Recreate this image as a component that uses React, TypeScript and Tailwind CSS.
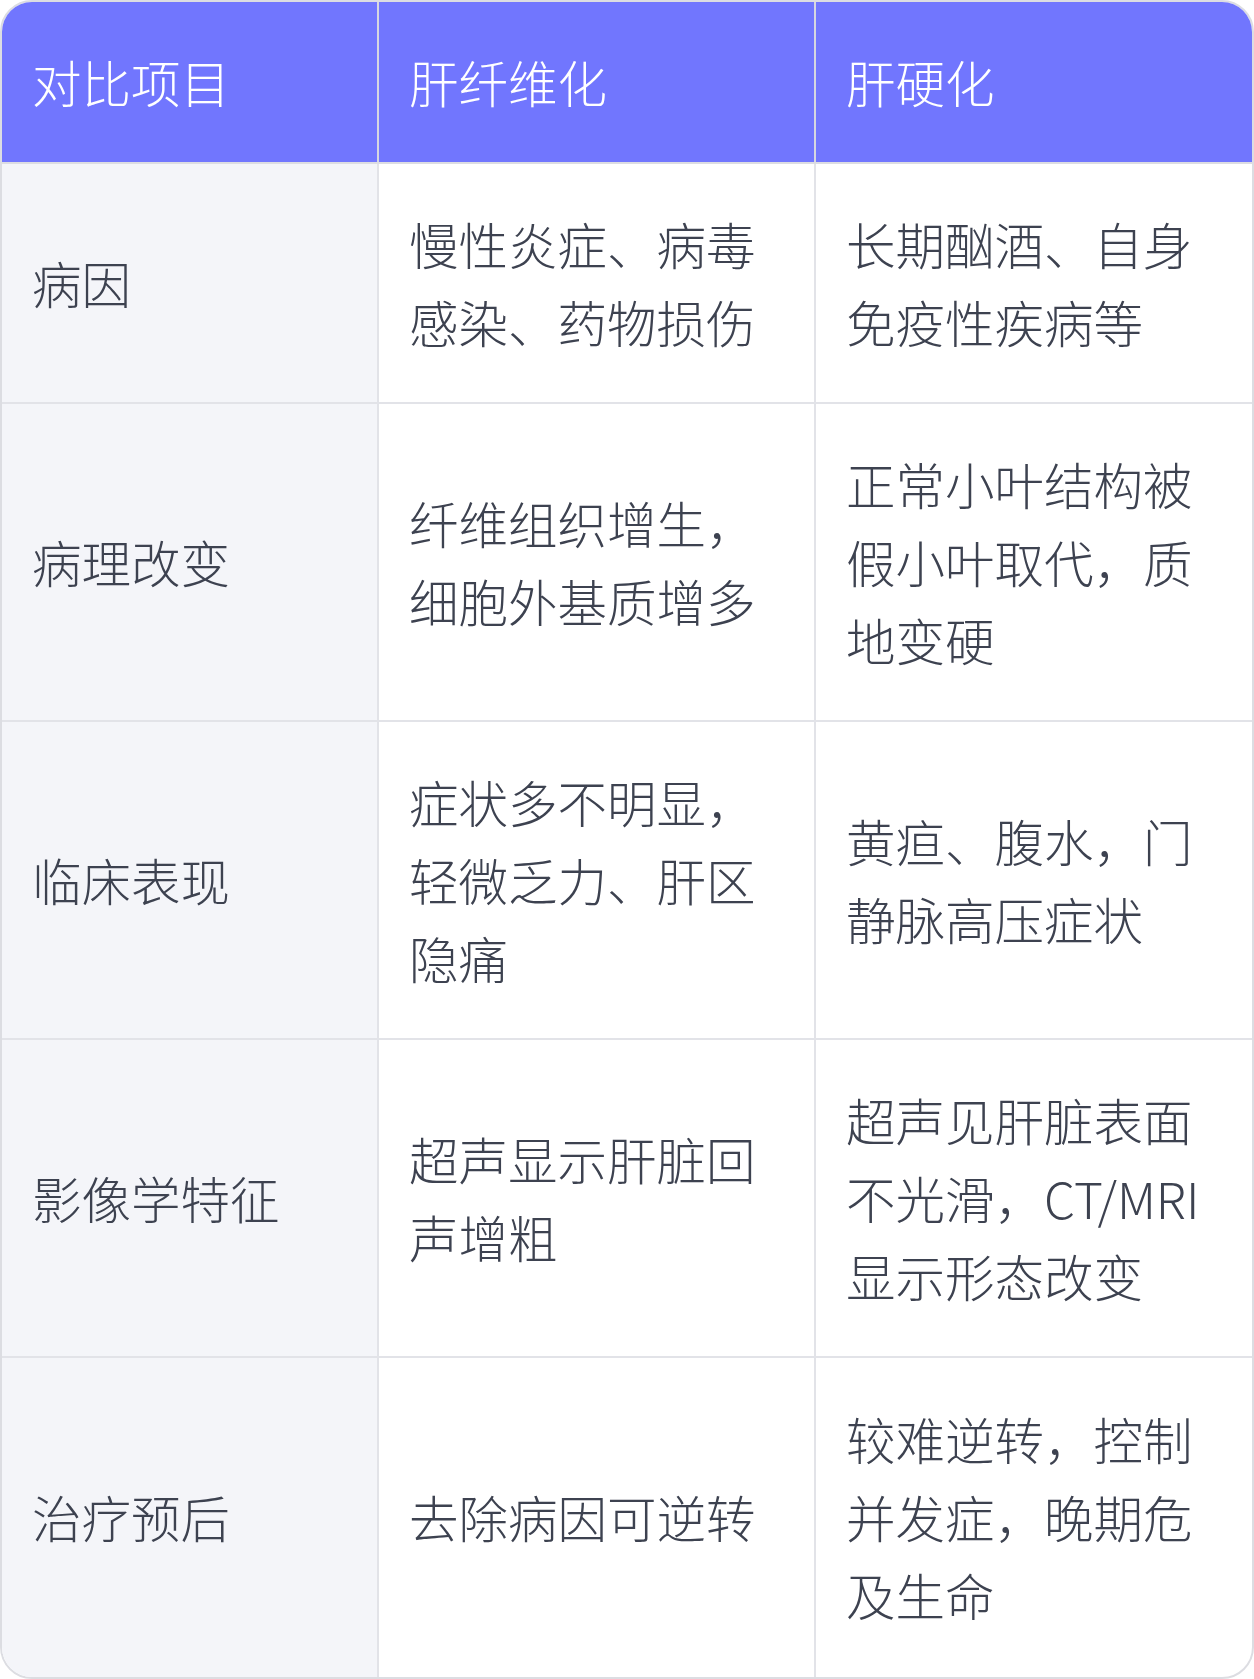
import React from "react";

const rows: [string, string, string][] = [
  ["病因", "慢性炎症、病毒感染、药物损伤", "长期酗酒、自身免疫性疾病等"],
  ["病理改变", "纤维组织增生，细胞外基质增多", "正常小叶结构被假小叶取代，质地变硬"],
  ["临床表现", "症状多不明显，轻微乏力、肝区隐痛", "黄疸、腹水，门静脉高压症状"],
  ["影像学特征", "超声显示肝脏回声增粗", "超声见肝脏表面不光滑，CT/MRI显示形态改变"],
  ["治疗预后", "去除病因可逆转", "较难逆转，控制并发症，晚期危及生命"],
];

export default function App() {
  return (
    <div
      className="w-[1254px] bg-white"
      style={{ fontFamily: '"Noto Sans CJK SC", "Noto Sans", sans-serif' }}
    >
      <div className="rounded-[32px] border-2 border-[#dcdde2] overflow-hidden font-extralight text-[49.5px] leading-[78px]">
        <div className="grid grid-cols-[377px_437px_1fr] bg-[#7176fe] text-white border-b-2 border-[#dcdde2]">
          <div className="px-[30px] py-[41px] border-r-2 border-[#d6d7e0]">对比项目</div>
          <div className="px-[30px] py-[41px] border-r-2 border-[#d6d7e0]">肝纤维化</div>
          <div className="px-[30px] py-[41px]">肝硬化</div>
        </div>
        {rows.map((r, i) => {
          const last = i === rows.length - 1;
          const py = last ? "pt-[42px] pb-[43px]" : "py-[41px]";
          return (
            <div
              key={i}
              className={
                "grid grid-cols-[377px_437px_1fr] text-[#3d4250] " +
                (last ? "" : "border-b-2 border-[#e2e3e8]")
              }
            >
              <div className={"px-[30px] bg-[#f4f5f9] border-r-2 border-[#e2e3e8] flex items-center " + py}>
                {r[0]}
              </div>
              <div className={"px-[30px] border-r-2 border-[#e2e3e8] flex items-center " + py}>
                <span>{r[1]}</span>
              </div>
              <div className={"px-[30px] flex items-center " + py}>
                <span>{r[2]}</span>
              </div>
            </div>
          );
        })}
      </div>
    </div>
  );
}
